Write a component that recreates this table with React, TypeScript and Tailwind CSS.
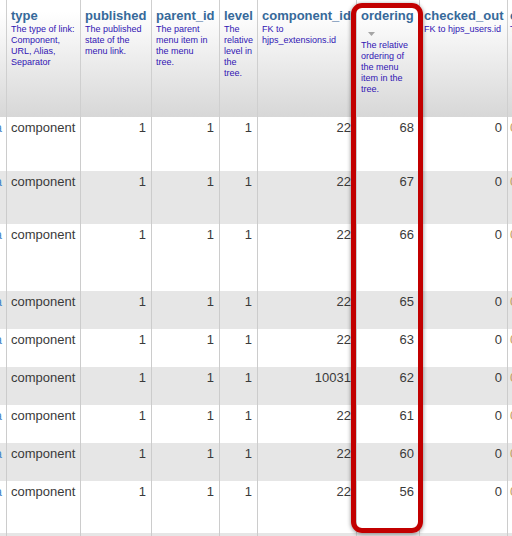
const grid = "grid grid-cols-[7px_74px_71px_68px_38px_99px_63px_88px_1fr]";

type HeadProps = { title?: string; lines?: string[]; arrow?: boolean; last?: boolean };

function Head({ title, lines = [], arrow, last }: HeadProps) {
  return (
    <div className={"overflow-hidden whitespace-nowrap pt-[8px] " + (last ? "pl-[2px]" : "border-r border-[#cfcfcf] pl-[4px]")}>
      {title && <div className="text-[13px] font-bold leading-[16px] text-[#36699a]">{title}</div>}
      {arrow && (
        <div className="h-[16px] pl-[7px] pt-[8px]">
          <svg width="7" height="4" className="block">
            <polygon points="0,0 7,0 3.5,4" fill="#a5a5a5" />
          </svg>
        </div>
      )}
      <div className="text-[9px] leading-[11px] text-[#3114b4]">
        {lines.map((l) => (
          <div key={l}>{l}</div>
        ))}
      </div>
    </div>
  );
}

const rows = [
  { h: "h-[54px]", comp: "22", ord: "68", mark: true },
  { h: "h-[53px]", comp: "22", ord: "67", mark: true },
  { h: "h-[67px]", comp: "22", ord: "66", mark: true },
  { h: "h-[38px]", comp: "22", ord: "65", mark: true },
  { h: "h-[38px]", comp: "22", ord: "63", mark: true },
  { h: "h-[38px]", comp: "10031", ord: "62", mark: false },
  { h: "h-[38px]", comp: "22", ord: "61", mark: true },
  { h: "h-[38px]", comp: "22", ord: "60", mark: true },
  { h: "h-[52px]", comp: "22", ord: "56", mark: true },
  { h: "h-[38px]", comp: "22", ord: "55", mark: true },
];

const cell = "overflow-hidden whitespace-nowrap border-r border-[#cccccc] pt-[3px] leading-[15px]";

export default function App() {
  return (
    <div className="relative h-[536px] w-[512px] overflow-hidden bg-white font-['Liberation_Sans',Arial,sans-serif] text-[13px] text-[#3a3a3a]">
      <div className={grid + " h-[117px] bg-linear-to-b from-white from-10% to-[#d7d7d7]"}>
        <Head />
        <Head title="type" lines={["The type of link:", "Component,", "URL, Alias,", "Separator"]} />
        <Head title="published" lines={["The published", "state of the", "menu link."]} />
        <Head title="parent_id" lines={["The parent", "menu item in", "the menu", "tree."]} />
        <Head title="level" lines={["The", "relative", "level in", "the", "tree."]} />
        <Head title="component_id" lines={["FK to", "hjps_extensions.id"]} />
        <Head title="ordering" arrow lines={["The relative", "ordering of", "the menu", "item in the", "tree."]} />
        <Head title="checked_out" lines={["FK to hjps_users.id"]} />
        <Head last title="checked_out_time" lines={["", "The time the"]} />
      </div>

      {rows.map((r, i) => (
        <div key={i} className={grid + " " + r.h + " " + (i % 2 === 0 ? "bg-white" : "bg-[#e6e6e6]")}>
          <div className={cell + " flex justify-end pr-[4px] text-[#4a86c8]"}>
            <span className="flex w-[3px] justify-end">{r.mark ? "a" : ""}</span>
          </div>
          <div className={cell + " pl-[4px]"}>component</div>
          <div className={cell + " pr-[5px] text-right"}>1</div>
          <div className={cell + " pr-[5px] text-right"}>1</div>
          <div className={cell + " pr-[5px] text-right"}>1</div>
          <div className={cell + " pr-[5px] text-right"}>{r.comp}</div>
          <div className={cell + " pr-[5px] text-right"}>{r.ord}</div>
          <div className={cell + " pr-[5px] text-right"}>0</div>
          <div className="overflow-hidden whitespace-nowrap pl-[2px] pt-[3px] leading-[15px] text-[#c29a5e]">0000-00-00 00:00:00</div>
        </div>
      ))}

      <div className="absolute left-[351px] top-[3px] h-[530px] w-[72px] rounded-[11px] border-[5px] border-[#c20000] shadow-[0_1px_4px_rgba(0,0,0,0.45)]" />
    </div>
  );
}
